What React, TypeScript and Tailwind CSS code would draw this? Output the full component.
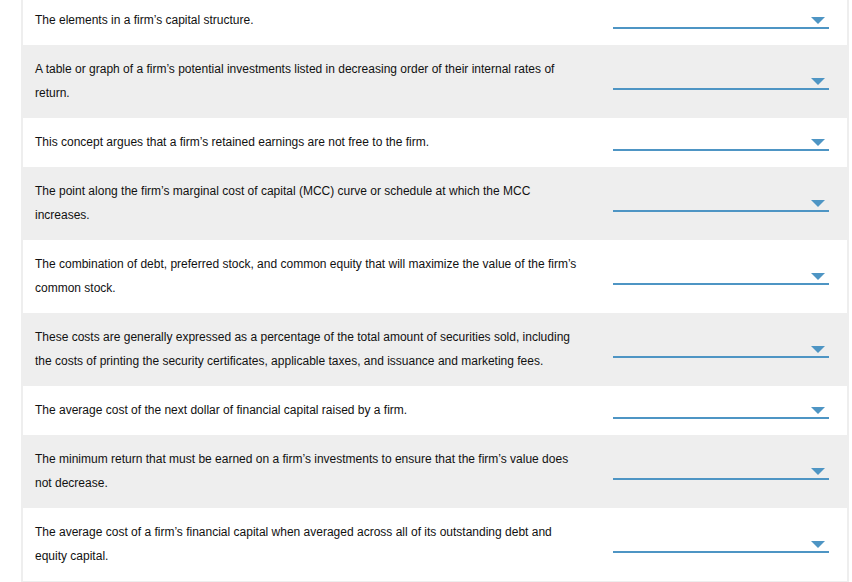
import React from "react";

const rows: string[][] = [
  ["The elements in a firm\u2019s capital structure."],
  [
    "A table or graph of a firm\u2019s potential investments listed in decreasing order of their internal rates of",
    "return.",
  ],
  ["This concept argues that a firm\u2019s retained earnings are not free to the firm."],
  [
    "The point along the firm\u2019s marginal cost of capital (MCC) curve or schedule at which the MCC",
    "increases.",
  ],
  [
    "The combination of debt, preferred stock, and common equity that will maximize the value of the firm\u2019s",
    "common stock.",
  ],
  [
    "These costs are generally expressed as a percentage of the total amount of securities sold, including",
    "the costs of printing the security certificates, applicable taxes, and issuance and marketing fees.",
  ],
  ["The average cost of the next dollar of financial capital raised by a firm."],
  [
    "The minimum return that must be earned on a firm\u2019s investments to ensure that the firm\u2019s value does",
    "not decrease.",
  ],
  [
    "The average cost of a firm\u2019s financial capital when averaged across all of its outstanding debt and",
    "equity capital.",
  ],
];

function Dropdown() {
  return (
    <div className="flex h-[18px] w-[216px] items-end justify-end border-b-2 border-[#4e95c4] pr-1 pb-[3px]">
      <svg width="14" height="7" viewBox="0 0 14 7">
        <polygon points="0,0 14,0 7,7" fill="#4e95c4" />
      </svg>
    </div>
  );
}

export default function App() {
  return (
    <div className="min-h-[582px] bg-white font-['Liberation_Sans',Arial,sans-serif]">
      <div className="ml-[21px] mt-[-6px] w-[828px] border-2 border-[#eeeeee]">
        {rows.map((lines, i) => (
          <div
            key={i}
            className={`flex items-center justify-between pl-3 pr-[18px] pt-3 pb-[13px] ${
              i % 2 === 1 ? "bg-[#eeeeee]" : "bg-white"
            }`}
          >
            <p className="text-[12px] leading-6 text-[#111]">
              {lines.map((l, j) => (
                <React.Fragment key={j}>
                  {j > 0 && <br />}
                  {l}
                </React.Fragment>
              ))}
            </p>
            <Dropdown />
          </div>
        ))}
      </div>
    </div>
  );
}
